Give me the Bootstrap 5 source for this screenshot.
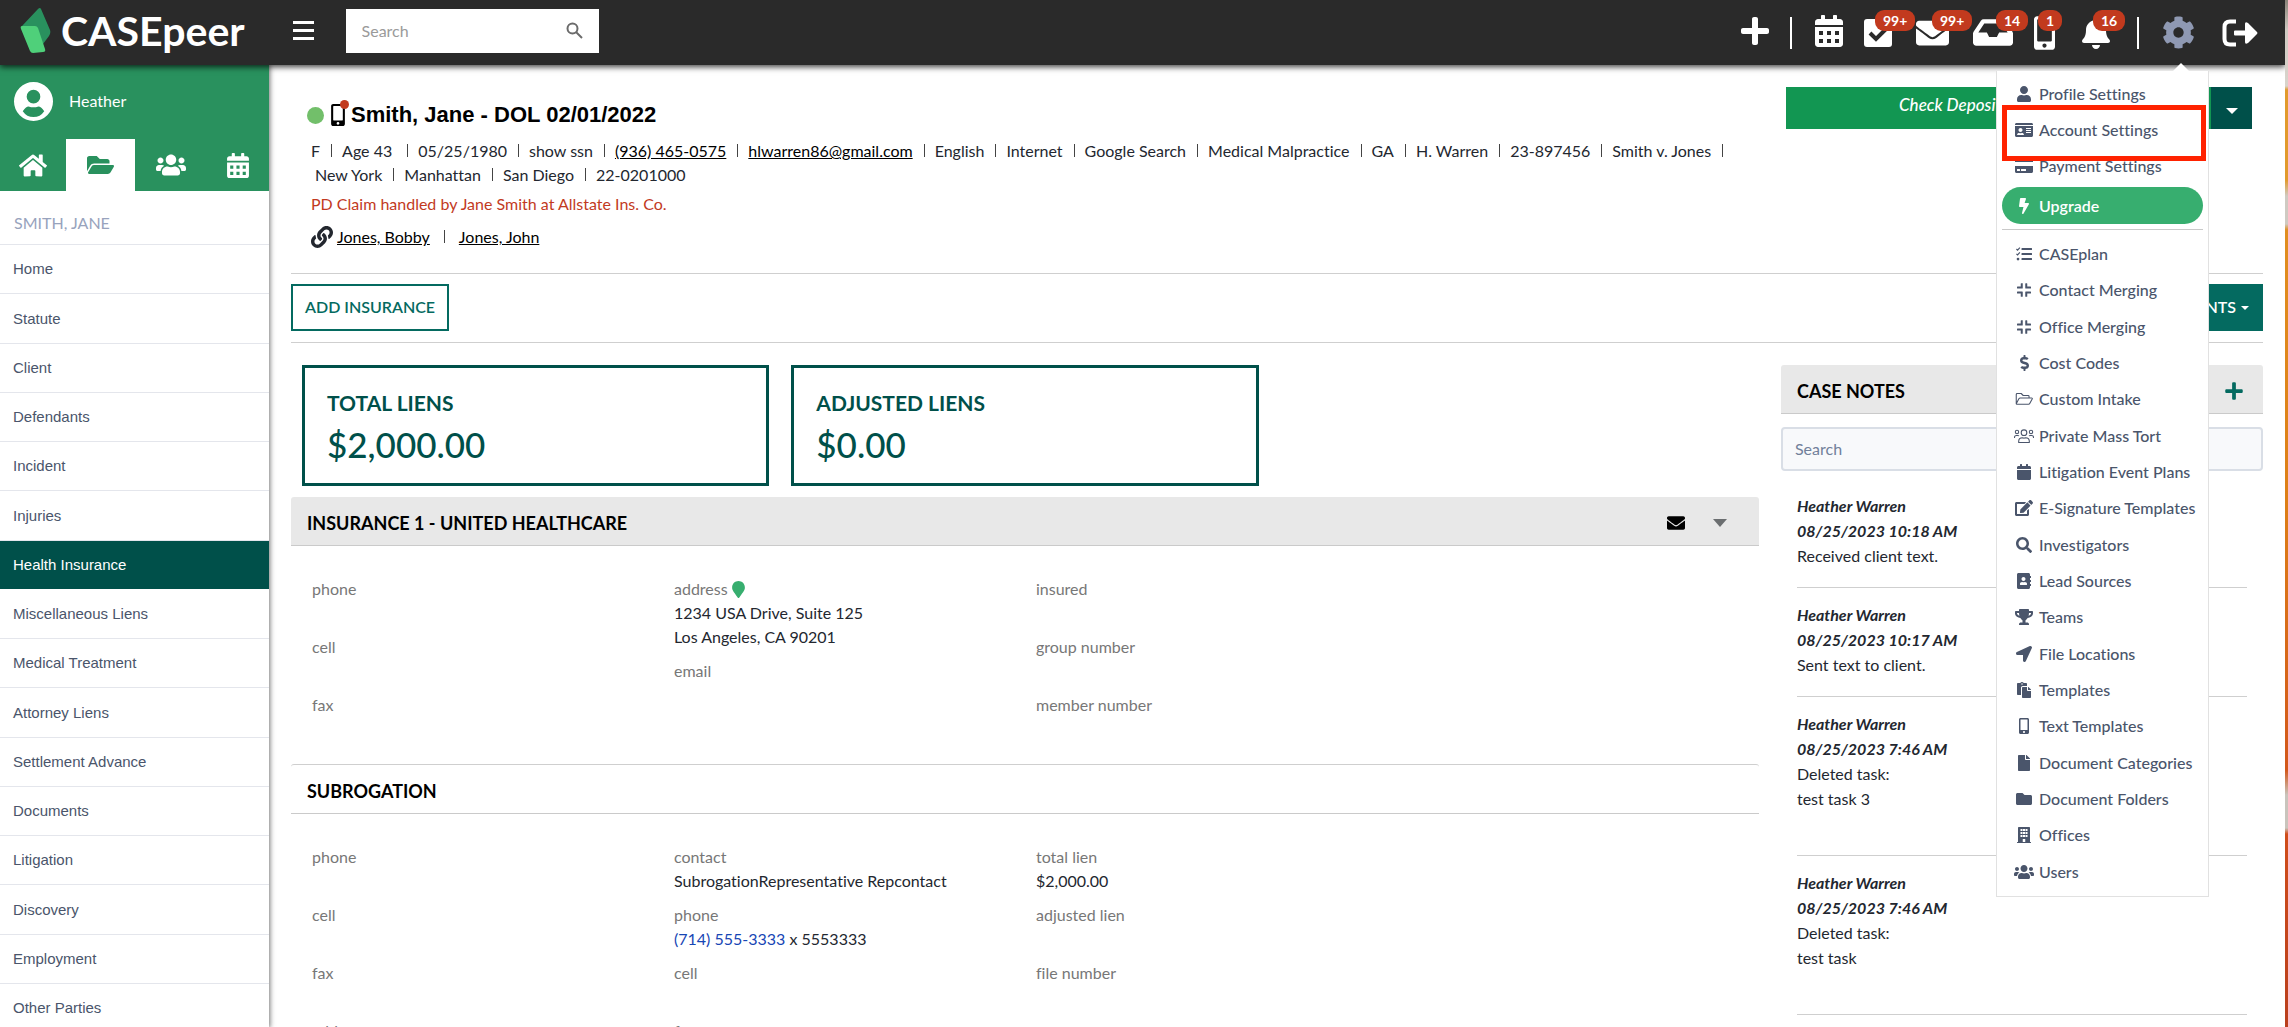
<!DOCTYPE html>
<html lang="en">
<head>
<meta charset="utf-8">
<meta name="viewport" content="width=device-width, initial-scale=1">
<title>CASEpeer</title>
<link rel="stylesheet" href="https://cdn.jsdelivr.net/npm/bootstrap@5.3.0/dist/css/bootstrap.min.css">
<style>
body{font-family:Lato,"Open Sans",sans-serif;font-variant-ligatures:none;font-size:16px;line-height:24px;color:#23272f;background:#fff}
svg{display:block;fill:currentColor;flex:none}
.desk{width:3px;background:linear-gradient(#8a8378 0,#cfcac2 30px,#d9d4cc 86px,#e19a2c 90px,#e19a2c 180px,#cfcac2 196px,#cfcac2 224px,#e08e1f 230px,#dd7f16 500px,#d2571a 770px,#c9c4bc 795px,#c9c4bc 828px,#cf4d1a 834px,#b93f1d 100%)}
.topbar{height:65px;background:#2a2a2a;color:#fff;box-shadow:0 2px 6px rgba(0,0,0,.75);position:relative;z-index:5}
.brand{font-size:41px;font-weight:700;line-height:44px;color:#fff;text-decoration:none}
.brand svg{margin-right:10px}
.burger span{display:block;width:21px;height:3px;background:#fff;margin-bottom:5px}
.burger span:last-child{margin-bottom:0}
.topsearch{width:253px;height:44px;background:#fff;color:#777;margin-left:32px}
.topsearch input{border:0;outline:0;width:100%;padding:0 0 0 16px;font-size:16px;line-height:24px;height:40px}
.topsearch input::placeholder{color:#9a9a9a}
.tools a{color:#fff;position:relative;display:flex;align-items:center;height:34px;margin-right:21px}
.tools .wide{margin-right:24px}
.tools .wider{margin-right:27px}
.tools .cog{color:#8f99b3}
.tools .rule{width:2px;height:32px;background:#fff;margin-right:23px}
.tools .pip{position:absolute;top:-6px;left:calc(100% - 17px);background:#c23a1e;border-radius:9px;font-size:14px;font-weight:700;line-height:21px;padding:0 8px;height:21px;color:#fff}
.sidebar{width:269px;flex:none;box-shadow:0 0 5px 1px rgba(0,0,0,.55);position:relative;z-index:3;background:#fff}
.userpane{background:#29915e;height:126px;color:#fff}
.userpane .who{height:74px;padding:0 0 2px 14px;gap:16px}
.tabs a{flex:1;height:52px;color:#fff;display:flex;align-items:center;justify-content:center}
.tabs a:first-child{flex:0 0 66px}
.tabs a.on{flex:0 0 69px;background:#fff;color:#29915e}
.tabs a:last-child{flex:0 0 63px}
.casename{height:54px;padding:20px 14px 0;color:#98a3bd;border-bottom:1px solid #e4e6ec;font-size:16px}
.sidenav{font-family:"Liberation Sans",Arial,sans-serif;font-size:15px;list-style:none;margin:0;padding:0}
.sidenav li{height:49px;border-bottom:1px solid #e4e6ec}
.sidenav li:nth-child(4n+2){height:50px}
.sidenav a{display:flex;align-items:center;height:100%;padding-left:13px;color:#4a556b;text-decoration:none}
.sidenav .on{background:#00504a;border-color:#fff}
.sidenav .on a{color:#fff}
.main{padding:0 22px}
.casehead{height:209px;border-bottom:1px solid #cfcfcf;padding:22px 11px 0 16px}
.casehead h1{font-family:"Liberation Sans",Arial,sans-serif;font-size:22px;font-weight:700;line-height:28px;color:#000;margin:0}
.titlerow{padding-top:14px;margin-bottom:10px}
.dot{width:17px;height:17px;border-radius:50%;background:#72bf6a}
.phonewrap{position:relative;color:#000;margin:0 6px 0 7px}
.phonewrap i{position:absolute;top:-4px;right:-4px;width:9px;height:9px;border-radius:50%;background:#c23a1e}
.facts span+span::before,.linked a+a::before{content:"";display:inline-block;width:1px;height:13px;background:#444;margin:0 10px 0 11px}
.facts a,.linked a{color:#000;text-decoration:underline}
.linked a+a::before{margin:0 14px}
.paid{color:#c23a1e;margin-top:5px}
.linked{margin-top:9px}
.deposit{width:466px;height:42px}
.deposit .bar{flex:1;background:#129652;color:#fff;font-style:italic;font-weight:500;padding:0 0 6px 113px;font-size:17px;white-space:nowrap;overflow:hidden;border:0;text-align:left;line-height:28px}
.deposit .more{width:41px;background:#00504a;border:0}
.caret{width:0;height:0;border:6px solid transparent;border-top-color:currentColor;border-bottom:0;display:inline-block}
.actions{height:69px;border-bottom:1px solid #cfcfcf;padding-top:10px}
.actions .btn{height:47px;border-radius:0;font-size:16px;font-weight:600;border:2px solid #046a60;color:#046a60;padding:0 12px 2px}
.actions .btn-docs{background:#046a60;color:#fff}
.actions .caret{border-width:4px 4px 0;margin-left:5px;vertical-align:middle}
.board{display:grid;grid-template-columns:67fr 22fr;gap:22px;padding-top:22px}
.sums{margin:0 0 11px;--bs-gutter-x:22px}
.sumbox{border:3px solid #00504a;height:121px;padding:21px 22px 0;color:#00504a}
.sumbox h2{font-size:21px;font-weight:700;line-height:28px;margin:0 0 5px}
.sumbox p{font-size:35px;font-weight:500;line-height:44px;margin:0}
.bandhead{height:49px;background:#e8e8e8;border-bottom:1px solid #cacaca;border-radius:3px 3px 0 0;padding:3px 16px 0;color:#000}
.bandhead h2{font-size:18px;font-weight:700;line-height:24px;margin:0;color:#000}
.plainhead{background:#fff;border-top:1px solid #cfcfcf;height:50px}
.bandtools{gap:28px;padding-right:23px;color:#6b6e70}
.bandtools .caret{border-width:8px 7px 0}
.addnote{color:#046a60}
.fields{padding:31px 10px 0;margin:0;--bs-gutter-x:22px}
.fields dl{margin:0}
.fields dt{font-weight:400;color:#777}
.fields dt svg{color:#37ae6f}
.fields dd{min-height:24px;margin:0 0 10px}
.ins{height:218px}
.tel{color:#1746b5;text-decoration:none}
.notesearch{height:44px;margin-top:13px;border:2px solid #d9dee6;border-radius:4px;background:#f8f9fb;padding:0 12px 2px;width:100%;font-size:16px;outline:0}
.notesearch::placeholder{color:#71809a}
.note{margin:0 16px;padding:14px 0 19px;border-bottom:1px solid #cfcfcf;line-height:25px}
.note:first-of-type{padding-top:22px}
.note strong{display:block;font-style:italic;font-weight:700}
.note.tall{padding-bottom:44px}
.setmenu{position:absolute;top:71px;right:76px;width:213px;background:#fff;border:1px solid #e1e1e1;border-top:0;z-index:10;padding:5px 5px 6px;color:#4a556b}
.setmenu::before{content:"";position:absolute;top:-8px;right:19px;border:8px solid transparent;border-bottom-color:#fff;border-top:0}
.setmenu a{display:flex;align-items:center;height:36px;color:inherit;text-decoration:none;padding-left:12px;font-weight:500;white-space:nowrap}
.setmenu ul{list-style:none;margin:0;padding:0}
.setmenu .lower li:nth-child(3n) a{height:37px}
.setmenu .ic{width:20px;margin-right:5px;display:flex;justify-content:center}
.setmenu .upgrade{background:#37ae6f;color:#fff;border-radius:19px;height:37px;margin-top:3px;font-weight:600}
.setmenu hr{margin:5px 0 6px;border-color:#bbb;opacity:.8}
.flag{position:absolute;top:34px;left:5px;width:204px;height:56px;border:5px solid #ff2200}
</style>
<script src="https://cdn.jsdelivr.net/npm/bootstrap@5.3.0/dist/js/bootstrap.bundle.min.js"></script>
</head>
<body class="vh-100 overflow-hidden">
<svg width="0" height="0" class="position-absolute" aria-hidden="true">
<symbol id="plus" viewBox="0 0 448 512"><path d="M416 208H272V64c0-17.67-14.33-32-32-32h-32c-17.67 0-32 14.33-32 32v144H32c-17.67 0-32 14.33-32 32v32c0 17.67 14.33 32 32 32h144v144c0 17.67 14.33 32 32 32h32c17.67 0 32-14.33 32-32V304h144c17.67 0 32-14.33 32-32v-32c0-17.67-14.33-32-32-32z"/></symbol>
<symbol id="user" viewBox="0 0 448 512"><path d="M224 256c70.7 0 128-57.3 128-128S294.7 0 224 0 96 57.3 96 128s57.3 128 128 128zm89.6 32h-16.7c-22.2 10.2-46.9 16-72.9 16s-50.6-5.8-72.9-16h-16.7C60.2 288 0 348.2 0 422.4V464c0 26.5 21.5 48 48 48h352c26.5 0 48-21.5 48-48v-41.6c0-74.2-60.2-134.4-134.4-134.4z"/></symbol>
<symbol id="cal" viewBox="0 0 448 512"><path d="M0 464c0 26.5 21.5 48 48 48h352c26.5 0 48-21.5 48-48V192H0v272zM400 64h-48V16c0-8.8-7.2-16-16-16h-32c-8.8 0-16 7.2-16 16v48H160V16c0-8.8-7.2-16-16-16h-32c-8.8 0-16 7.2-16 16v48H48C21.5 64 0 85.5 0 112v48h448v-48c0-26.5-21.5-48-48-48z"/></symbol>
<symbol id="caldots" viewBox="0 0 448 512"><path fill-rule="evenodd" d="M0 464c0 26.5 21.5 48 48 48h352c26.5 0 48-21.5 48-48V192H0v272zM64 256h64v64H64zM192 256h64v64h-64zM320 256h64v64h-64zM64 384h64v64H64zM192 384h64v64h-64zM320 384h64v64h-64zM400 64h-48V16c0-8.8-7.2-16-16-16h-32c-8.8 0-16 7.2-16 16v48H160V16c0-8.8-7.2-16-16-16h-32c-8.8 0-16 7.2-16 16v48H48C21.5 64 0 85.5 0 112v48h448v-48c0-26.5-21.5-48-48-48z"/></symbol>
<symbol id="mail" viewBox="0 64 512 384"><path d="M502.3 190.8c3.9-3.1 9.7-.2 9.7 4.7V400c0 26.5-21.5 48-48 48H48c-26.5 0-48-21.5-48-48V195.6c0-5 5.7-7.8 9.7-4.7 22.4 17.4 52.1 39.5 154.1 113.6 21.1 15.4 56.7 47.8 92.2 47.6 35.7.3 72-32.8 92.3-47.6 102-74.1 131.6-96.3 154-113.7zM256 320c23.2.4 56.6-29.2 73.4-41.4 132.7-96.3 142.8-104.7 173.4-128.7 5.8-4.5 9.2-11.5 9.2-18.9v-19c0-26.5-21.5-48-48-48H48c-26.5 0-48 21.5-48 48v19c0 7.4 3.4 14.3 9.2 18.9 30.6 23.9 40.7 32.4 173.4 128.7 16.8 12.2 50.2 41.8 73.4 41.4z"/></symbol>
<symbol id="inbox" viewBox="0 64 576 384"><path d="M567.938 243.908L462.25 85.374A48.003 48.003 0 0 0 422.311 64H153.689a48 48 0 0 0-39.938 21.374L8.062 243.908A47.994 47.994 0 0 0 0 270.533V400c0 26.51 21.49 48 48 48h480c26.51 0 48-21.49 48-48V270.533a47.994 47.994 0 0 0-8.062-26.625zM162.252 128h251.497l85.333 128H376l-32 64H232l-32-64H76.918l85.334-128z"/></symbol>
<symbol id="mobile" viewBox="0 0 320 512"><path d="M272 0H48C21.5 0 0 21.5 0 48v416c0 26.5 21.5 48 48 48h224c26.5 0 48-21.5 48-48V48c0-26.5-21.5-48-48-48zM160 480c-17.7 0-32-14.3-32-32s14.3-32 32-32 32 14.3 32 32-14.3 32-32 32zm112-108c0 6.6-5.4 12-12 12H60c-6.6 0-12-5.4-12-12V60c0-6.6 5.4-12 12-12h200c6.6 0 12 5.4 12 12v312z"/></symbol>
<symbol id="bell" viewBox="0 0 448 512"><path d="M224 512c35.32 0 63.97-28.65 63.97-64H160.03c0 35.35 28.65 64 63.97 64zm215.39-149.71c-19.32-20.76-55.47-51.99-55.47-154.29 0-77.7-54.48-139.9-127.94-155.16V32c0-17.67-14.32-32-31.98-32s-31.98 14.33-31.98 32v20.84C118.56 68.1 64.08 130.3 64.08 208c0 102.3-36.15 133.53-55.47 154.29-6 6.45-8.66 14.16-8.61 21.71.11 16.4 12.98 32 32.1 32h383.8c19.12 0 32-15.6 32.1-32 .05-7.55-2.61-15.27-8.61-21.71z"/></symbol>
<symbol id="cog" viewBox="0 0 512 512"><path d="M487.4 315.7l-42.6-24.6c4.3-23.2 4.3-47 0-70.2l42.6-24.6c4.9-2.8 7.1-8.6 5.5-14-11.1-35.6-30-67.8-54.7-94.6-3.8-4.1-10-5.1-14.8-2.3L380.8 110c-17.9-15.4-38.5-27.3-60.8-35.1V25.8c0-5.6-3.9-10.5-9.4-11.7-36.7-8.2-74.3-7.8-109.2 0-5.5 1.2-9.4 6.1-9.4 11.7V75c-22.2 7.9-42.8 19.8-60.8 35.1L88.7 85.5c-4.9-2.8-11-1.9-14.8 2.3-24.7 26.7-43.6 58.9-54.7 94.6-1.7 5.4.6 11.2 5.5 14L67.3 221c-4.3 23.2-4.3 47 0 70.2l-42.6 24.6c-4.9 2.8-7.1 8.6-5.5 14 11.1 35.6 30 67.8 54.7 94.6 3.8 4.1 10 5.1 14.8 2.3l42.6-24.6c17.9 15.4 38.5 27.3 60.8 35.1v49.2c0 5.6 3.9 10.5 9.4 11.7 36.7 8.2 74.3 7.8 109.2 0 5.5-1.2 9.4-6.1 9.4-11.7v-49.2c22.2-7.9 42.8-19.8 60.8-35.1l42.6 24.6c4.9 2.8 11 1.9 14.8-2.3 24.7-26.7 43.6-58.9 54.7-94.6 1.5-5.5-.7-11.3-5.6-14.1zM256 336c-44.1 0-80-35.9-80-80s35.9-80 80-80 80 35.9 80 80-35.9 80-80 80z"/></symbol>
<symbol id="home" viewBox="0 0 576 512"><path d="M280.37 148.26L96 300.11V464a16 16 0 0 0 16 16l112.06-.29a16 16 0 0 0 15.92-16V368a16 16 0 0 1 16-16h64a16 16 0 0 1 16 16v95.64a16 16 0 0 0 16 16.05L464 480a16 16 0 0 0 16-16V300L295.67 148.26a12.19 12.19 0 0 0-15.3 0zM571.6 251.47L488 182.56V44.05a12 12 0 0 0-12-12h-56a12 12 0 0 0-12 12v72.61L318.47 43a48 48 0 0 0-61 0L4.34 251.47a12 12 0 0 0-1.6 16.9l25.5 31A12 12 0 0 0 45.15 301l235.22-193.74a12.19 12.19 0 0 1 15.3 0L530.9 301a12 12 0 0 0 16.9-1.6l25.5-31a12 12 0 0 0-1.7-16.93z"/></symbol>
<symbol id="fopen" viewBox="0 0 576 512"><path d="M572.694 292.093L500.27 416.248A63.997 63.997 0 0 1 444.989 448H45.025c-18.523 0-30.064-20.093-20.731-36.093l72.424-124.155A64 64 0 0 1 152 256h399.964c18.523 0 30.064 20.093 20.73 36.093zM152 224h328v-48c0-26.51-21.49-48-48-48H272l-64-64H48C21.49 64 0 85.49 0 112v278.046l69.077-118.418C86.214 242.25 117.989 224 152 224z"/></symbol>
<symbol id="users" viewBox="0 0 640 512"><path d="M96 224c35.3 0 64-28.7 64-64s-28.7-64-64-64-64 28.7-64 64 28.7 64 64 64zm448 0c35.3 0 64-28.7 64-64s-28.7-64-64-64-64 28.7-64 64 28.7 64 64 64zm32 32h-64c-17.6 0-33.5 7.1-45.1 18.6 40.3 22.1 68.9 62 75.1 109.4h66c17.7 0 32-14.3 32-32v-32c0-35.3-28.7-64-64-64zm-256 0c61.9 0 112-50.1 112-112S381.9 32 320 32 208 82.1 208 144s50.1 112 112 112zm76.8 32h-8.3c-20.8 10-43.9 16-68.5 16s-47.6-6-68.5-16h-8.3C179.6 288 128 339.6 128 403.2V432c0 26.5 21.5 48 48 48h288c26.5 0 48-21.5 48-48v-28.8c0-63.6-51.6-115.2-115.2-115.2zm-223.7-13.4C161.5 263.1 145.6 256 128 256H64c-35.3 0-64 28.7-64 64v32c0 17.7 14.3 32 32 32h65.9c6.3-47.4 34.9-87.3 75.2-109.4z"/></symbol>
<symbol id="idcard" viewBox="0 0 576 512"><path fill-rule="evenodd" d="M528 32H48C21.5 32 0 53.5 0 80v16h576V80c0-26.5-21.5-48-48-48zM0 432c0 26.5 21.5 48 48 48h480c26.5 0 48-21.5 48-48V128H0v304zM352 192h160v32H352zM352 256h160v32H352zM352 320h160v32H352zM176 192c35.3 0 64 28.7 64 64s-28.7 64-64 64-64-28.7-64-64 28.7-64 64-64zM67.1 396.2C75.5 370.5 99.6 352 128 352h8.2c12.3 5.1 25.7 8 39.8 8s27.6-2.9 39.8-8h8.2c28.4 0 52.5 18.5 60.9 44.2 3.2 9.9-5.2 19.8-15.6 19.8H82.7c-10.4 0-18.8-10-15.6-19.8z"/></symbol>
<symbol id="card" viewBox="0 0 576 512"><path d="M0 432c0 26.5 21.5 48 48 48h480c26.5 0 48-21.5 48-48V256H0v176zm192-68c0-6.6 5.4-12 12-12h136c6.6 0 12 5.4 12 12v40c0 6.6-5.4 12-12 12H204c-6.6 0-12-5.4-12-12v-40zm-128 0c0-6.6 5.4-12 12-12h72c6.6 0 12 5.4 12 12v40c0 6.6-5.4 12-12 12H76c-6.6 0-12-5.4-12-12v-40zM576 80v48H0V80c0-26.5 21.5-48 48-48h480c26.5 0 48 21.5 48 48z"/></symbol>
<symbol id="bolt" viewBox="0 0 320 512"><path d="M296 160H180.6l42.6-129.8C227.2 15 215.7 0 200 0H56C44 0 33.8 8.9 32.2 20.8l-32 240C-1.7 275.2 9.5 288 24 288h118.7L96.6 482.5c-3.6 15.2 8 29.5 23.3 29.5 8.4 0 16.4-4.4 20.8-12l176-304c9.3-15.9-2.2-36-20.7-36z"/></symbol>
<symbol id="tasks" viewBox="0 0 512 512"><path d="M192 64h304q16 0 16 16v32q0 16-16 16H192q-16 0-16-16V80q0-16 16-16zM192 224h304q16 0 16 16v32q0 16-16 16H192q-16 0-16-16v-32q0-16 16-16zM192 384h304q16 0 16 16v32q0 16-16 16H192q-16 0-16-16v-32q0-16 16-16z"/><circle cx="64" cy="416" r="44"/><path d="M14 96l36 36 74-82M14 252l36 36 74-82" fill="none" stroke="currentColor" stroke-width="38"/></symbol>
<symbol id="compress" viewBox="0 0 448 512"><path d="M136 40h48v152q0 16-16 16H16q-16 0-16-16v-32q0-16 16-16h104V56q0-16 16-16zM264 56q0-16 16-16h32q16 0 16 16v88h104q16 0 16 16v32q0 16-16 16H280q-16 0-16-16zM0 320q0-16 16-16h152q16 0 16 16v136q0 16-16 16h-32q-16 0-16-16v-88H16q-16 0-16-16zM264 320q0-16 16-16h152q16 0 16 16v32q0 16-16 16H328v88q0 16-16 16h-32q-16 0-16-16z"/></symbol>
<symbol id="dollar" viewBox="0 0 288 512"><path d="M209.2 233.4l-108-31.6C88.7 198.2 80 186.5 80 173.5c0-16.3 13.2-29.5 29.5-29.5h66.3c12.2 0 24.2 3.7 34.2 10.5 6.1 4.1 14.3 3.1 19.5-2l34.8-34c7.1-6.9 6.1-18.4-1.8-24.5C238 74.8 207.4 64.1 176 64V16c0-8.8-7.2-16-16-16h-32c-8.8 0-16 7.2-16 16v48h-2.5C45.8 64-5.4 118.7.5 183.6c4.2 46.1 39.4 83.6 83.8 96.6l102.5 30c12.5 3.7 21.2 15.3 21.2 28.3 0 16.3-13.2 29.5-29.5 29.5h-66.3C100 368 88 364.3 78 357.5c-6.1-4.1-14.3-3.1-19.5 2l-34.8 34c-7.1 6.9-6.1 18.4 1.8 24.5 24.5 19.2 55.1 29.9 86.5 30v48c0 8.8 7.2 16 16 16h32c8.8 0 16-7.2 16-16v-48.2c46.6-.9 90.3-28.6 105.7-72.7 21.5-61.6-14.6-124.8-72.5-141.7z"/></symbol>
<symbol id="fline" viewBox="0 0 576 512"><path d="M40 410V108q0-28 28-28h130l64 64h160q28 0 28 28v52M40 410l84-160q14-26 42-26h366q32 0 18 30l-74 140q-14 30-44 30H60q-20 0-20-14z" fill="none" stroke="currentColor" stroke-width="34" stroke-linejoin="round"/></symbol>
<symbol id="uline" viewBox="0 0 640 512"><g fill="none" stroke="currentColor" stroke-width="34"><circle cx="320" cy="150" r="90"/><circle cx="96" cy="128" r="54"/><circle cx="544" cy="128" r="54"/><path d="M150 462v-40q0-110 120-110 50 22 100 0 120 0 120 110v40zM16 320v-20q0-60 60-60h40q30 0 44 14M624 320v-20q0-60-60-60h-40q-30 0-44 14" stroke-linejoin="round"/></g></symbol>
<symbol id="edit" viewBox="0 0 576 512"><path d="M402.6 83.2l90.2 90.2c3.8 3.8 3.8 10 0 13.8L274.4 405.6l-92.8 10.3c-12.4 1.4-22.9-9.1-21.5-21.5l10.3-92.8L388.8 83.2c3.8-3.8 10-3.8 13.8 0zm162-22.9l-48.8-48.8c-15.2-15.2-39.9-15.2-55.2 0l-35.4 35.4c-3.8 3.8-3.8 10 0 13.8l90.2 90.2c3.8 3.8 10 3.8 13.8 0l35.4-35.4c15.2-15.3 15.2-40 0-55.2zM384 346.2V448H64V128h229.8c3.2 0 6.2-1.3 8.5-3.5l40-40c7.6-7.6 2.2-20.5-8.5-20.5H48C21.5 64 0 85.5 0 112v352c0 26.5 21.5 48 48 48h352c26.5 0 48-21.5 48-48V306.2c0-10.7-12.9-16-20.5-8.5l-40 40c-2.2 2.3-3.5 5.3-3.5 8.5z"/></symbol>
<symbol id="search" viewBox="0 0 512 512"><path d="M505 442.7L405.3 343c-4.5-4.5-10.6-7-17-7H372c27.6-35.3 44-79.7 44-128C416 93.1 322.9 0 208 0S0 93.1 0 208s93.1 208 208 208c48.3 0 92.7-16.4 128-44v16.3c0 6.4 2.5 12.5 7 17l99.7 99.7c9.4 9.4 24.6 9.4 33.9 0l28.3-28.3c9.4-9.4 9.4-24.6.1-34zM208 336c-70.7 0-128-57.2-128-128 0-70.7 57.2-128 128-128 70.7 0 128 57.2 128 128 0 70.7-57.2 128-128 128z"/></symbol>
<symbol id="abook" viewBox="0 0 448 512"><path d="M436 160c6.6 0 12-5.4 12-12v-40c0-6.6-5.4-12-12-12h-20V48c0-26.5-21.5-48-48-48H48C21.5 0 0 21.5 0 48v416c0 26.5 21.5 48 48 48h320c26.5 0 48-21.5 48-48v-48h20c6.6 0 12-5.4 12-12v-40c0-6.6-5.4-12-12-12h-20v-64h20c6.6 0 12-5.4 12-12v-40c0-6.6-5.4-12-12-12h-20v-64h20zm-228-32c35.3 0 64 28.7 64 64s-28.7 64-64 64-64-28.7-64-64 28.7-64 64-64zm112 236.8c0 10.6-10 19.2-22.4 19.2H118.4C106 384 96 375.4 96 364.8v-19.2c0-31.8 30.1-57.6 67.2-57.6h5c12.3 5.1 25.7 8 39.8 8s27.6-2.9 39.8-8h5c37.1 0 67.2 25.8 67.2 57.6v19.2z"/></symbol>
<symbol id="trophy" viewBox="0 0 576 512"><path d="M552 64H448V24c0-13.3-10.7-24-24-24H152c-13.3 0-24 10.7-24 24v40H24C10.7 64 0 74.7 0 88v56c0 35.7 22.5 72.4 61.9 100.7 31.5 22.7 69.8 37.1 110 41.7C203.3 338.5 240 360 240 360v72h-48c-35.3 0-64 20.7-64 56v12c0 6.6 5.4 12 12 12h296c6.6 0 12-5.4 12-12v-12c0-35.3-28.7-56-64-56h-48v-72s36.7-21.5 68.1-73.6c40.3-4.6 78.6-19 110-41.7 39.3-28.3 61.9-65 61.9-100.7V88c0-13.3-10.7-24-24-24zM99.3 192.8C74.9 175.2 64 155.6 64 144v-16h64.2c1 32.6 5.8 61.2 12.8 86.2-15.1-5.2-29.2-12.4-41.7-21.4zM512 144c0 16.1-17.7 36.1-35.3 48.8-12.5 9-26.7 16.2-41.8 21.4 7-25 11.8-53.6 12.8-86.2H512v16z"/></symbol>
<symbol id="arrow" viewBox="0 0 512 512"><path d="M444.52 3.52L28.74 195.42c-47.97 22.39-31.98 92.75 19.19 92.75h175.91v175.91c0 51.17 70.36 67.17 92.75 19.19l191.9-415.78c15.99-38.39-25.59-79.97-63.97-63.97z"/></symbol>
<symbol id="paste" viewBox="0 0 448 512"><path d="M128 184c0-30.879 25.122-56 56-56h136V56c0-13.255-10.745-24-24-24h-80.61C204.306 12.89 183.637 0 160 0s-44.306 12.89-55.39 32H24C10.745 32 0 42.745 0 56v336c0 13.255 10.745 24 24 24h104V184zm32-144c13.255 0 24 10.745 24 24s-10.745 24-24 24-24-10.745-24-24 10.745-24 24-24zm184 248h104v200c0 13.255-10.745 24-24 24H184c-13.255 0-24-10.745-24-24V184c0-13.255 10.745-24 24-24h136v104c0 13.2 10.8 24 24 24zm104-38.059V256h-96v-96h6.059a24 24 0 0 1 16.97 7.029l65.941 65.941a24.002 24.002 0 0 1 7.03 16.971z"/></symbol>
<symbol id="file" viewBox="0 0 384 512"><path d="M224 136V0H24C10.7 0 0 10.7 0 24v464c0 13.3 10.7 24 24 24h336c13.3 0 24-10.7 24-24V160H248c-13.2 0-24-10.8-24-24zm160-14.1v6.1H256V0h6.1c6.4 0 12.5 2.5 17 7l97.9 98c4.5 4.5 7 10.6 7 16.9z"/></symbol>
<symbol id="folder" viewBox="0 0 512 512"><path d="M464 128H272l-64-64H48C21.49 64 0 85.49 0 112v288c0 26.51 21.49 48 48 48h416c26.51 0 48-21.49 48-48V176c0-26.51-21.49-48-48-48z"/></symbol>
<symbol id="building" viewBox="0 0 448 512"><path fill-rule="evenodd" d="M56 0h336q24 0 24 24v452h20q12 0 12 12v24H0v-24q0-12 12-12h20V24Q32 0 56 0zM112 64h64v64h-64zM192 64h64v64h-64zM272 64h64v64h-64zM112 160h64v64h-64zM192 160h64v64h-64zM272 160h64v64h-64zM112 256h64v64h-64zM192 256h64v64h-64zM272 256h64v64h-64zM184 384h80v92h-80z"/></symbol>
<symbol id="pin" viewBox="0 0 384 512"><path d="M172.268 501.67C26.97 291.031 0 269.413 0 192 0 85.961 85.961 0 192 0s192 85.961 192 192c0 77.413-26.97 99.031-172.268 309.67-9.535 13.774-29.93 13.773-39.464 0z"/></symbol>
<symbol id="chain" viewBox="0 0 512 512"><path d="M326.612 185.391c59.747 59.809 58.927 155.698.36 214.59-.11.12-.24.25-.36.37l-67.2 67.2c-59.27 59.27-155.699 59.262-214.96 0-59.27-59.26-59.27-155.7 0-214.96l37.106-37.106c9.84-9.84 26.786-3.3 27.294 10.606.648 17.722 3.826 35.527 9.69 52.721 1.986 5.822.567 12.262-3.783 16.612l-13.087 13.087c-28.026 28.026-28.905 73.66-1.155 101.96 28.024 28.579 74.086 28.749 102.325.51l67.2-67.19c28.191-28.191 28.073-73.757 0-101.83-3.701-3.694-7.429-6.564-10.341-8.569a16.037 16.037 0 0 1-6.947-12.606c-.396-10.567 3.348-21.456 11.698-29.806l21.054-21.055c5.521-5.521 14.182-6.199 20.584-1.731a152.482 152.482 0 0 1 20.522 17.197zM467.547 44.449c-59.261-59.262-155.69-59.27-214.96 0l-67.2 67.2c-.12.12-.25.25-.36.37-58.566 58.892-59.387 154.781.36 214.59a152.454 152.454 0 0 0 20.521 17.196c6.402 4.468 15.064 3.789 20.584-1.731l21.054-21.055c8.35-8.35 12.094-19.239 11.698-29.806a16.037 16.037 0 0 0-6.947-12.606c-2.912-2.005-6.64-4.875-10.341-8.569-28.073-28.073-28.191-73.639 0-101.83l67.2-67.19c28.239-28.239 74.3-28.069 102.325.51 27.75 28.3 26.872 73.934-1.155 101.96l-13.087 13.087c-4.35 4.35-5.769 10.79-3.783 16.612 5.864 17.194 9.042 34.999 9.69 52.721.509 13.906 17.454 20.446 27.294 10.606l37.106-37.106c59.271-59.259 59.271-155.699.001-214.959z"/></symbol>
</svg>

<div class="d-flex h-100">
<div class="flex-fill d-flex flex-column position-relative overflow-hidden">

<header class="topbar d-flex align-items-center flex-shrink-0">
  <a class="brand d-flex align-items-center ps-3 ms-1 mb-1" href="#" aria-label="CASEpeer">
    <svg width="31" height="46" viewBox="0 0 31 46"><path d="M18 1q2-2 3 0l9 21q1 3-1 6l-6 8-6-13-15-5z" fill="#29915e"/><path d="M2 18h13q2 0 3 2l7 21q1 3-2 3l-10 1q-2 0-3-2L1 21q-1-3 1-3z" fill="#4fd07a"/></svg>CASEpeer</a>
  <button class="burger btn p-0 border-0 ms-5 mb-1" type="button" aria-label="Toggle menu"><span></span><span></span><span></span></button>
  <label class="topsearch d-flex align-items-center pe-3 mb-1">
    <input type="text" placeholder="Search" aria-label="Search">
    <svg width="17" height="17" viewBox="0 0 17 17"><g fill="none" stroke="#6b6b6b" stroke-width="2"><circle cx="6.500" cy="6.500" r="5"/><path d="M10 10l6 6"/></g></svg>
  </label>
  <nav class="tools d-flex align-items-center ms-auto" aria-label="Tools">
    <a href="#" aria-label="Add"><svg class="mb-1" width="28" height="32"><use href="#plus"/></svg></a>
    <span class="rule"></span>
    <a href="#" aria-label="Calendar"><svg class="mb-1" width="28" height="32"><use href="#caldots"/></svg></a>
    <a class="wide" href="#" aria-label="Tasks"><svg width="28" height="28" viewBox="0 0 28 28"><rect width="28" height="28" rx="3"/><path d="M6 14l6 6L23 9" fill="none" stroke="#2a2a2a" stroke-width="4"/></svg><span class="pip">99+</span></a>
    <a class="wide" href="#" aria-label="Messages"><svg width="33" height="26"><use href="#mail"/></svg><span class="pip">99+</span></a>
    <a href="#" aria-label="Inbox"><svg width="40" height="27"><use href="#inbox"/></svg><span class="pip">14</span></a>
    <a class="wider" href="#" aria-label="Texts"><svg width="21" height="34"><use href="#mobile"/></svg><span class="pip">1</span></a>
    <a class="wider" href="#" aria-label="Alerts"><svg width="28" height="32"><use href="#bell"/></svg><span class="pip">16</span></a>
    <span class="rule"></span>
    <a class="cog wider" href="#" aria-label="Settings"><svg width="33" height="33"><use href="#cog"/></svg></a>
    <a class="wider" href="#" aria-label="Log out"><svg width="36" height="28" viewBox="0 0 36 28"><path d="M14 2.500H8Q2.500 2.500 2.500 8v12q0 5.500 5.500 5.500h6" fill="none" stroke="#fff" stroke-width="4"/><path d="M13 11.500h10V5q0-3 3-1l9 9q1 1 0 2l-9 9q-3 2-3-1v-6.500H13q-1 0-1-1v-3q0-1 1-1z"/></svg></a>
  </nav>
</header>

<div class="d-flex flex-fill" style="min-height:0">
<aside class="sidebar">
  <div class="userpane">
    <div class="who d-flex align-items-center"><svg width="39" height="39" viewBox="0 0 40 40"><path fill-rule="evenodd" d="M20 0a20 20 0 1 1 0 40 20 20 0 0 1 0-40zm0 8a7 7 0 1 0 0 14 7 7 0 0 0 0-14zM9 30q4 6 11 6t11-6q-3-5-6-5-5 2-10 0-3 0-6 5z"/></svg><span>Heather</span></div>
    <nav class="tabs d-flex" aria-label="Sections">
      <a href="#" aria-label="Home"><svg width="28" height="25"><use href="#home"/></svg></a>
      <a class="on" href="#" aria-label="Cases"><svg width="27" height="24"><use href="#fopen"/></svg></a>
      <a href="#" aria-label="Contacts"><svg width="30" height="24"><use href="#users"/></svg></a>
      <a href="#" aria-label="Calendar"><svg width="22" height="25"><use href="#caldots"/></svg></a>
    </nav>
  </div>
  <div class="casename">SMITH, JANE</div>
  <ul class="sidenav">
    <li><a href="#">Home</a></li><li><a href="#">Statute</a></li><li><a href="#">Client</a></li><li><a href="#">Defendants</a></li><li><a href="#">Incident</a></li><li><a href="#">Injuries</a></li><li class="on"><a href="#">Health Insurance</a></li><li><a href="#">Miscellaneous Liens</a></li><li><a href="#">Medical Treatment</a></li><li><a href="#">Attorney Liens</a></li><li><a href="#">Settlement Advance</a></li><li><a href="#">Documents</a></li><li><a href="#">Litigation</a></li><li><a href="#">Discovery</a></li><li><a href="#">Employment</a></li><li><a href="#">Other Parties</a></li>
  </ul>
</aside>

<main class="main flex-fill overflow-hidden">
  <section class="casehead d-flex justify-content-between">
    <div>
      <div class="titlerow d-flex align-items-center"><span class="dot"></span><span class="phonewrap"><svg width="14" height="22"><use href="#mobile"/></svg><i></i></span><h1>Smith, Jane - DOL 02/01/2022</h1></div>
      <div class="ps-1">
        <div class="facts"><span>F</span><span>Age 43 </span><span>05/25/1980</span><span>show ssn</span><span><a href="#">(936) 465-0575</a></span><span><a href="#">hlwarren86@gmail.com</a></span><span>English</span><span>Internet</span><span>Google Search</span><span>Medical Malpractice</span><span>GA</span><span>H. Warren</span><span>23-897456</span><span>Smith v. Jones</span><span></span></div>
        <div class="facts ps-1"><span>New York</span><span>Manhattan</span><span>San Diego</span><span>22-0201000</span></div>
        <div class="paid">PD Claim handled by Jane Smith at Allstate Ins. Co.</div>
        <div class="linked d-flex align-items-center"><svg class="me-1" width="22" height="22"><use href="#chain"/></svg><a href="#">Jones, Bobby</a><a href="#">Jones, John</a></div>
      </div>
    </div>
    <div class="deposit d-flex flex-shrink-0"><button type="button" class="bar">Check Deposited</button><button type="button" class="more text-white p-0" aria-label="More"><span class="caret"></span></button></div>
  </section>

  <section class="actions d-flex align-items-start justify-content-between">
    <button class="btn" type="button">ADD INSURANCE</button>
    <button class="btn btn-docs" type="button">DOCUMENTS<span class="caret"></span></button>
  </section>

  <div class="board">
    <div>
      <div class="row sums">
        <div class="col-4"><div class="sumbox"><h2>TOTAL LIENS</h2><p>$2,000.00</p></div></div>
        <div class="col-4"><div class="sumbox"><h2>ADJUSTED LIENS</h2><p>$0.00</p></div></div>
      </div>
      <div class="bandhead d-flex align-items-center"><h2>INSURANCE 1 - UNITED HEALTHCARE</h2>
        <div class="bandtools d-flex align-items-center ms-auto ps-2 pe-3"><a class="text-black" href="#" aria-label="Email"><svg width="18" height="14"><use href="#mail"/></svg></a><button class="btn border-0 p-0 text-reset" type="button" aria-label="Collapse"><span class="caret d-block"></span></button></div></div>
      <div class="row fields ins">
        <div class="col-3"><dl><dt>phone</dt><dd></dd><dt>cell</dt><dd></dd><dt>fax</dt><dd></dd></dl></div>
        <div class="col-3"><dl><dt class="d-flex align-items-center">address<svg class="ms-1" width="13" height="17"><use href="#pin"/></svg></dt><dd>1234 USA Drive, Suite 125<br>Los Angeles, CA 90201</dd><dt>email</dt><dd></dd></dl></div>
        <div class="col-3"><dl><dt>insured</dt><dd></dd><dt>group number</dt><dd></dd><dt>member number</dt><dd></dd></dl></div>
      </div>
      <div class="bandhead plainhead d-flex align-items-center"><h2>SUBROGATION</h2></div>
      <div class="row fields">
        <div class="col-3"><dl><dt>phone</dt><dd></dd><dt>cell</dt><dd></dd><dt>fax</dt><dd></dd><dt>address</dt><dd></dd></dl></div>
        <div class="col-3"><dl><dt>contact</dt><dd>SubrogationRepresentative Repcontact</dd><dt>phone</dt><dd><a class="tel" href="#">(714) 555-3333</a> x 5553333</dd><dt>cell</dt><dd></dd><dt>fax</dt><dd></dd></dl></div>
        <div class="col-3"><dl><dt>total lien</dt><dd>$2,000.00</dd><dt>adjusted lien</dt><dd></dd><dt>file number</dt><dd></dd></dl></div>
      </div>
    </div>
    <aside>
      <div class="bandhead d-flex align-items-center"><h2>CASE NOTES</h2><button class="addnote btn border-0 p-0 ms-auto me-1" type="button" aria-label="Add note"><svg width="18" height="20"><use href="#plus"/></svg></button></div>
      <input class="notesearch" type="text" placeholder="Search" aria-label="Search notes">
      <article class="note"><strong>Heather Warren</strong><strong>08/25/2023 10:18 AM</strong>Received client text.</article>
      <article class="note"><strong>Heather Warren</strong><strong>08/25/2023 10:17 AM</strong>Sent text to client.</article>
      <article class="note tall"><strong>Heather Warren</strong><strong>08/25/2023 7:46 AM</strong>Deleted task:<br>test task 3</article>
      <article class="note tall"><strong>Heather Warren</strong><strong>08/25/2023 7:46 AM</strong>Deleted task:<br>test task</article>
    </aside>
  </div>
</main>
</div>

<nav class="setmenu" aria-label="Settings">
  <ul>
    <li><a href="#"><span class="ic"><svg width="14" height="16"><use href="#user"/></svg></span>Profile Settings</a></li>
    <li><a href="#"><span class="ic"><svg width="18" height="16"><use href="#idcard"/></svg></span>Account Settings</a></li>
    <li><a href="#"><span class="ic"><svg width="18" height="16"><use href="#card"/></svg></span>Payment Settings</a></li>
    <li><a class="upgrade" href="#"><span class="ic"><svg width="10" height="16"><use href="#bolt"/></svg></span>Upgrade</a></li>
  </ul>
  <hr>
  <ul class="lower">
    <li><a href="#"><span class="ic"><svg width="16" height="16"><use href="#tasks"/></svg></span>CASEplan</a></li>
    <li><a href="#"><span class="ic"><svg width="14" height="16"><use href="#compress"/></svg></span>Contact Merging</a></li>
    <li><a href="#"><span class="ic"><svg width="14" height="16"><use href="#compress"/></svg></span>Office Merging</a></li>
    <li><a href="#"><span class="ic"><svg width="9" height="16"><use href="#dollar"/></svg></span>Cost Codes</a></li>
    <li><a href="#"><span class="ic"><svg width="18" height="16"><use href="#fline"/></svg></span>Custom Intake</a></li>
    <li><a href="#"><span class="ic"><svg width="20" height="16"><use href="#uline"/></svg></span>Private Mass Tort</a></li>
    <li><a href="#"><span class="ic"><svg width="14" height="16"><use href="#cal"/></svg></span>Litigation Event Plans</a></li>
    <li><a href="#"><span class="ic"><svg width="18" height="16"><use href="#edit"/></svg></span>E-Signature Templates</a></li>
    <li><a href="#"><span class="ic"><svg width="16" height="16"><use href="#search"/></svg></span>Investigators</a></li>
    <li><a href="#"><span class="ic"><svg width="14" height="16"><use href="#abook"/></svg></span>Lead Sources</a></li>
    <li><a href="#"><span class="ic"><svg width="18" height="16"><use href="#trophy"/></svg></span>Teams</a></li>
    <li><a href="#"><span class="ic"><svg width="16" height="16"><use href="#arrow"/></svg></span>File Locations</a></li>
    <li><a href="#"><span class="ic"><svg width="14" height="16"><use href="#paste"/></svg></span>Templates</a></li>
    <li><a href="#"><span class="ic"><svg width="10" height="16"><use href="#mobile"/></svg></span>Text Templates</a></li>
    <li><a href="#"><span class="ic"><svg width="12" height="16"><use href="#file"/></svg></span>Document Categories</a></li>
    <li><a href="#"><span class="ic"><svg width="16" height="16"><use href="#folder"/></svg></span>Document Folders</a></li>
    <li><a href="#"><span class="ic"><svg width="14" height="16"><use href="#building"/></svg></span>Offices</a></li>
    <li><a href="#"><span class="ic"><svg width="20" height="16"><use href="#users"/></svg></span>Users</a></li>
  </ul>
  <div class="flag"></div>
</nav>
</div>
<div class="desk flex-shrink-0"></div>
</div>
</body>
</html>
